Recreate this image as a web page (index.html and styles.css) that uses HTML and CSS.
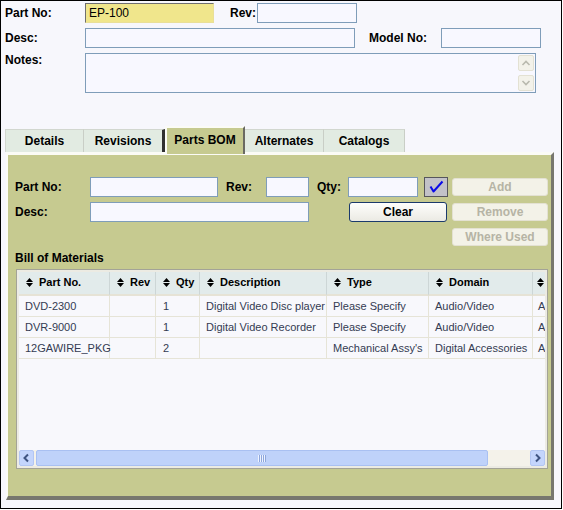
FILE: index.html
```html
<!DOCTYPE html>
<html lang="en">
<head>
    <meta charset="UTF-8">
    <title>Part Editor</title>
    <link rel="stylesheet" href="styles.css">
</head>
<body>
    <div class="window">
        <div class="form-row">
            <label>Part No:</label>
            <div class="field key part-field">EP-100</div>
            <label class="inline-label rev-label">Rev:</label>
            <div class="field short-field"></div>
        </div>
        <div class="form-row">
            <label>Desc:</label>
            <div class="field desc-field"></div>
            <label class="inline-label model-label">Model No:</label>
            <div class="field short-field"></div>
        </div>
        <div class="form-row">
            <label class="notes-label">Notes:</label>
            <div class="notes">
                <div class="notes-scroll">
                    <div class="scroll-btn">
                        <svg width="10" height="8" viewBox="0 0 10 8"><path d="M1.5 6 L5 2.5 L8.5 6" fill="none" stroke="#b9b9ae" stroke-width="1.6"/></svg>
                    </div>
                    <div class="scroll-btn">
                        <svg width="10" height="8" viewBox="0 0 10 8"><path d="M1.5 2 L5 5.5 L8.5 2" fill="none" stroke="#b9b9ae" stroke-width="1.6"/></svg>
                    </div>
                </div>
            </div>
        </div>

        <div class="tabs">
            <div class="tab first">Details</div>
            <div class="tab before-active">Revisions</div>
            <div class="tab active">Parts BOM</div>
            <div class="tab">Alternates</div>
            <div class="tab last">Catalogs</div>
        </div>

        <div class="panel">
            <div class="entry-grid">
                <label>Part No:</label>
                <div class="field"></div>
                <label class="pad-label">Rev:</label>
                <div class="field"></div>
                <label class="pad-label">Qty:</label>
                <div class="field"></div>
                <button class="check-btn">
                    <svg width="22" height="18" viewBox="0 0 22 18"><path d="M5.5 8.5 L8.5 13.5 L17.5 3.5" fill="none" stroke="#0a0ae8" stroke-width="2" stroke-linejoin="round"/></svg>
                </button>
                <button class="side-btn" disabled>Add</button>

                <label>Desc:</label>
                <div class="field wide-desc"></div>
                <button class="clear-btn">Clear</button>
                <button class="side-btn" disabled>Remove</button>

                <button class="side-btn where-btn" disabled>Where Used</button>
            </div>

            <div class="section-title">Bill of Materials</div>

            <div class="bom">
                <div class="bom-inner">
                    <div class="bom-body">
                        <table>
                            <colgroup>
                                <col style="width:91px">
                                <col style="width:46px">
                                <col style="width:44px">
                                <col style="width:127px">
                                <col style="width:102px">
                                <col style="width:104px">
                                <col style="width:13px">
                            </colgroup>
                            <thead>
                                <tr>
                                    <th><span class="sort"><svg width="7" height="9" viewBox="0 0 7 9"><path d="M0 4 L3.5 0 L7 4 Z M0 5 L3.5 9 L7 5 Z" fill="#000"/></svg></span>Part No.</th>
                                    <th><span class="sort"><svg width="7" height="9" viewBox="0 0 7 9"><path d="M0 4 L3.5 0 L7 4 Z M0 5 L3.5 9 L7 5 Z" fill="#000"/></svg></span>Rev</th>
                                    <th><span class="sort"><svg width="7" height="9" viewBox="0 0 7 9"><path d="M0 4 L3.5 0 L7 4 Z M0 5 L3.5 9 L7 5 Z" fill="#000"/></svg></span>Qty</th>
                                    <th><span class="sort"><svg width="7" height="9" viewBox="0 0 7 9"><path d="M0 4 L3.5 0 L7 4 Z M0 5 L3.5 9 L7 5 Z" fill="#000"/></svg></span>Description</th>
                                    <th><span class="sort"><svg width="7" height="9" viewBox="0 0 7 9"><path d="M0 4 L3.5 0 L7 4 Z M0 5 L3.5 9 L7 5 Z" fill="#000"/></svg></span>Type</th>
                                    <th><span class="sort"><svg width="7" height="9" viewBox="0 0 7 9"><path d="M0 4 L3.5 0 L7 4 Z M0 5 L3.5 9 L7 5 Z" fill="#000"/></svg></span>Domain</th>
                                    <th class="cut"><span class="sort"><svg width="7" height="9" viewBox="0 0 7 9"><path d="M0 4 L3.5 0 L7 4 Z M0 5 L3.5 9 L7 5 Z" fill="#000"/></svg></span></th>
                                </tr>
                            </thead>
                            <tbody>
                                <tr>
                                    <td>DVD-2300</td>
                                    <td></td>
                                    <td>1</td>
                                    <td>Digital Video Disc player</td>
                                    <td>Please Specify</td>
                                    <td>Audio/Video</td>
                                    <td class="cut">A</td>
                                </tr>
                                <tr>
                                    <td>DVR-9000</td>
                                    <td></td>
                                    <td>1</td>
                                    <td>Digital Video Recorder</td>
                                    <td>Please Specify</td>
                                    <td>Audio/Video</td>
                                    <td class="cut">A</td>
                                </tr>
                                <tr>
                                    <td>12GAWIRE_PKG</td>
                                    <td></td>
                                    <td>2</td>
                                    <td></td>
                                    <td>Mechanical Assy's</td>
                                    <td>Digital Accessories</td>
                                    <td class="cut">A</td>
                                </tr>
                            </tbody>
                        </table>
                    </div>
                    <div class="hscroll">
                        <div class="hs-btn">
                            <svg width="9" height="10" viewBox="0 0 9 10"><path d="M6 1.5 L2.5 5 L6 8.5" fill="none" stroke="#3f5482" stroke-width="2"/></svg>
                        </div>
                        <div class="hs-thumb"><span class="grip"></span></div>
                        <div class="hs-track"></div>
                        <div class="hs-btn">
                            <svg width="9" height="10" viewBox="0 0 9 10"><path d="M3 1.5 L6.5 5 L3 8.5" fill="none" stroke="#3f5482" stroke-width="2"/></svg>
                        </div>
                    </div>
                </div>
            </div>
        </div>
    </div>
</body>
</html>
```

FILE: styles.css
```css
* {
    box-sizing: border-box;
}
body {
    margin: 0;
    font-family: "Liberation Sans", Arial, sans-serif;
    font-size: 12px;
    color: #000;
    background-color: #fff;
}
.window {
    width: 562px;
    height: 509px;
    border: 1px solid #000;
    background-color: #f7f7fc;
    padding: 2px 0 0 4px;
}
label {
    font-weight: bold;
    line-height: 20px;
}
.form-row {
    display: flex;
    align-items: flex-start;
    margin-bottom: 5px;
}
.form-row > label {
    width: 80px;
}
.rev-label {
    margin-left: 16px;
    width: 27px !important;
}
.model-label {
    margin-left: 14px;
    width: 72px !important;
}
.notes-label {
    line-height: 14px;
}
.field {
    height: 20px;
    border: 1px solid #7f9db9;
    background-color: #f8f8ff;
    padding: 0 3px;
    line-height: 18px;
    font-size: 12px;
}
.field.key {
    background-color: #f0e68c;
    border-color: #6f6f6f #e9df98 #e9df98 #6f6f6f;
}
.part-field {
    width: 129px;
}
.short-field {
    width: 100px;
}
.desc-field {
    width: 270px;
}
.notes {
    width: 451px;
    height: 40px;
    border: 1px solid #7f9db9;
    background-color: #f8f8ff;
    padding: 1px;
    display: flex;
    justify-content: flex-end;
}
.notes-scroll {
    width: 16px;
    display: flex;
    flex-direction: column;
    justify-content: space-between;
}
.scroll-btn {
    height: 16px;
    border: 1px solid #e3e1d3;
    border-radius: 2px;
    background-color: #f3f2ea;
    display: flex;
    align-items: center;
    justify-content: center;
}

/* tabs */
.tabs {
    display: flex;
    align-items: flex-end;
    margin-top: 33px;
}
.tab {
    height: 23px;
    line-height: 22px;
    text-align: center;
    font-weight: bold;
    background-color: #e2ebe2;
    border-top: 1px solid #d2d7cf;
    border-right: 1px solid #c9cec6;
    width: 79px;
}
.tab.first {
    border-left: 1px solid #d2d7cf;
}
.tab.before-active {
    width: 81px;
    border-right: 3px solid #303030;
}
.tab.active {
    position: relative;
    z-index: 1;
    width: 80px;
    height: 28px;
    line-height: 24px;
    margin-bottom: -2px;
    background-color: #c6ca90;
    border-top: 2px solid #fbfbf6;
    border-left: 2px solid #fbfbf6;
    border-right: 2px solid #6a6a62;
}
.tab.last {
    width: 81px;
}

/* panel */
.panel {
    margin-left: 1px;
    width: 548px;
    height: 348px;
    background-color: #c6ca90;
    border-top: 3px solid #fbfbf6;
    border-left: 2px solid #fbfbf6;
    border-right: 3px solid #77776e;
    border-bottom: 4px solid #77776e;
    padding: 22px 3px 0 7px;
}
.entry-grid {
    display: grid;
    grid-template-columns: 75px 128px 48px 43px 39px 70px 30px 100px;
    grid-template-rows: 20px 20px 20px;
    row-gap: 5px;
    align-items: center;
}
.pad-label {
    padding-left: 8px;
}
.wide-desc {
    grid-column: 2 / 5;
}
button {
    font-family: "Liberation Sans", Arial, sans-serif;
    font-size: 12px;
    font-weight: bold;
    padding: 0;
}
.check-btn {
    justify-self: end;
    width: 24px;
    height: 20px;
    background-color: #c2c2c8;
    border: 1px solid #56565c;
    display: flex;
    align-items: center;
    justify-content: center;
}
.side-btn {
    justify-self: end;
    width: 96px;
    height: 18px;
    grid-column: 8;
    background-color: #f3f2e8;
    border: 1px solid #e3e1d2;
    border-radius: 3px;
    color: #b6b4a5;
}
.where-btn {
    grid-row: 3;
}
.clear-btn {
    grid-column: 6 / 8;
    margin-left: 1px;
    width: 98px;
    height: 20px;
    border: 1px solid #1b3a6c;
    border-radius: 3px;
    background: linear-gradient(#fefefc, #ebeae3);
    color: #000;
}
.section-title {
    margin-top: 4px;
    margin-bottom: 4px;
    font-weight: bold;
    line-height: 14px;
}

/* bill of materials grid */
.bom {
    margin-left: 1px;
    width: 532px;
    height: 200px;
    border: 1px solid #a3a397;
    padding: 2px;
    box-shadow: inset 0 0 0 2px #ecebe3;
}
.bom-inner {
    height: 100%;
    display: flex;
    flex-direction: column;
    background-color: #f8f8fc;
}
.bom-body {
    flex: 1;
    overflow: hidden;
}
table {
    border-collapse: separate;
    border-spacing: 0;
    table-layout: fixed;
    width: 527px;
}
th {
    text-align: left;
    font-size: 11px;
    font-weight: bold;
    line-height: 21px;
    padding: 0 0 0 7px;
    white-space: nowrap;
    background-color: #e2ebeb;
    border-right: 1px solid #cdd6d6;
    border-bottom: 2px solid #e6e3d6;
}
th.cut {
    padding-left: 4px;
    border-right: none;
}
.sort {
    display: inline-block;
    vertical-align: -1px;
    margin-right: 6px;
}
th.cut .sort {
    margin-right: 0;
}
td {
    font-size: 11px;
    line-height: 20px;
    padding: 0 6px;
    white-space: nowrap;
    color: #343b52;
    border-right: 1px solid #e6e4d7;
    border-bottom: 1px solid #e6e4d7;
}
td:nth-child(1) {
    padding-right: 0;
}
td:nth-child(3) {
    padding-left: 7px;
}
td.cut {
    padding: 0 0 0 5px;
    border-right: none;
}
.hscroll {
    height: 16px;
    display: flex;
    background-color: #f4f2ea;
}
.hs-btn {
    width: 15px;
    height: 16px;
    border: 1px solid #b3c6f3;
    border-radius: 2px;
    background-color: #c4d5fc;
    display: flex;
    align-items: center;
    justify-content: center;
}
.hs-thumb {
    margin-left: 2px;
    width: 452px;
    height: 16px;
    border: 1px solid #a9c0f2;
    border-radius: 2px;
    background-color: #bfd2fa;
    display: flex;
    align-items: center;
    justify-content: center;
}
.grip {
    width: 8px;
    height: 7px;
    background: repeating-linear-gradient(90deg, #eef3ff 0 1px, #8ea7dc 1px 2px);
}
.hs-track {
    flex: 1;
}
```
